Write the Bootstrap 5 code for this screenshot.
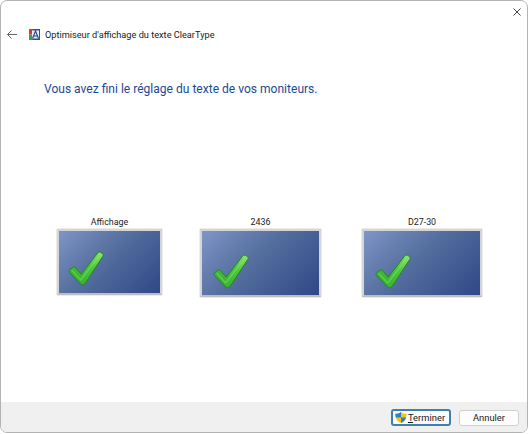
<!DOCTYPE html>
<html lang="fr">
<head>
    <meta charset="UTF-8">
    <title>Optimiseur d'affichage du texte ClearType</title>
    <link rel="stylesheet" href="https://cdn.jsdelivr.net/npm/bootstrap@5.3.0/dist/css/bootstrap.min.css">
    <style>
        html, body {
            height: 100%;
            background: #fff;
        }

        body {
            font-family: Roboto, "Open Sans", sans-serif;
            color: #1a1a1a;
            overflow: hidden;
        }

        .app-window {
            width: 528px;
            height: 433px;
            background: #fff;
            border: 1px solid #b4b4b4;
            border-radius: 7px;
            overflow: hidden;
        }

        .close-row {
            height: 20px;
            padding-right: 6px;
            padding-top: 7px;
        }

        .title-row {
            height: 27px;
            padding-left: 6px;
            font-size: 9.2px;
            color: #222;
        }

        .title-row svg { flex: none; }

        .cleartype-icon { margin-left: 12px; }

        .title-text { margin-left: 5px; }

        .main-heading {
            margin: 31px 0 0 43px;
            font-size: 12.05px;
            font-weight: 400;
            line-height: 20px;
            color: #1c4a96;
        }

        .screens {
            margin-top: 116px;
            padding-left: 56px;
        }

        .screen-item {
            font-size: 8.9px;
            line-height: 14px;
            text-align: center;
        }

        .screen-a { width: 105px; margin-right: 38px; }
        .screen-b { width: 121px; margin-right: 41px; }
        .screen-c { width: 120px; }

        .screen-box {
            position: relative;
            height: 68px;
            border: 2px solid #d3d5d9;
            border-bottom-color: #bcbec2;
            background: linear-gradient(135deg, #7f95c7 0%, #56709f 42%, #2f4888 100%);
            box-shadow: 0 0 1px #8d8d8d;
        }

        .screen-a .screen-box { height: 66px; }

        .screen-box svg {
            position: absolute;
            left: 9px;
            bottom: 7px;
        }

        .screen-b .screen-box svg,
        .screen-c .screen-box svg {
            left: 11px;
            bottom: 6px;
        }

        .bottom-bar {
            height: 30px;
            background: #f0f0f0;
            padding-right: 8px;
            padding-top: 1px;
            gap: 8px;
        }

        .bottom-btn {
            height: 16px;
            font-size: 9.4px;
            line-height: 14px;
            padding: 0;
            color: #1a1a1a;
            background: #fdfdfd;
            border: 1px solid #d0d0d0;
            border-radius: 3px;
        }

        .btn-finish {
            width: 60px;
            height: 17px;
            border: 2px solid #3d7fb5;
            background: #fafafa;
        }

        .btn-finish svg { margin-left: -3px; }

        .btn-cancel { width: 60px; }

        .btn-finish u { text-underline-offset: 1px; }
    </style>
</head>
<body>
    <div class="app-window d-flex flex-column">
        <div class="close-row d-flex justify-content-end">
            <svg width="8" height="8" viewBox="0 0 8 8"><path d="M.5.5l7 7M7.500.5l-7 7" stroke="#444" stroke-width="1" fill="none"/></svg>
        </div>

        <div class="title-row d-flex align-items-center">
            <svg width="10" height="9" viewBox="0 0 10 9"><path d="M.5 4.500h9.500M.5 4.500l4-4M.5 4.500l4 4" stroke="#666" stroke-width="1" fill="none"/></svg>
            <svg class="cleartype-icon" width="11" height="11" viewBox="0 0 11 11">
                <rect width="4" height="5.500" fill="#d23a34"/>
                <rect y="5.500" width="4" height="5.500" fill="#3f9a55"/>
                <rect x="4" width="7" height="11" fill="#2b50a8"/>
                <rect x="3" y="1.500" width="7" height="8" fill="#e9ecf5"/>
                <path d="M3.500 9.500L6.500 2 9.500 9.500M4.500 7h4" fill="none" stroke="#27408f" stroke-width="1.100"/>
            </svg>
            <span class="title-text">Optimiseur d'affichage du texte ClearType</span>
        </div>

        <h1 class="main-heading">Vous avez fini le réglage du texte de vos moniteurs.</h1>

        <div class="screens d-flex">
            <div class="screen-item screen-a">
                <div>Affichage</div>
                <div class="screen-box">
                    <svg width="36" height="35" viewBox="0 0 36 35"><use href="#check"/></svg>
                </div>
            </div>
            <div class="screen-item screen-b">
                <div>2436</div>
                <div class="screen-box">
                    <svg width="36" height="35" viewBox="0 0 36 35"><use href="#check"/></svg>
                </div>
            </div>
            <div class="screen-item screen-c">
                <div>D27-30</div>
                <div class="screen-box">
                    <svg width="36" height="35" viewBox="0 0 36 35"><use href="#check"/></svg>
                </div>
            </div>
        </div>

        <div class="bottom-bar mt-auto d-flex justify-content-end align-items-center">
            <button class="btn bottom-btn btn-finish d-flex align-items-center justify-content-center" type="button">
                <svg width="14" height="13" viewBox="0 0 15 14">
                    <path d="M7.500 1C5.500 2.500 3.500 3 1.500 3c0 4.500 1 8 6 10 5-2 6-5.500 6-10-2 0-4-.5-6-2z" fill="#f5c518"/>
                    <path d="M7.500 1C5.500 2.500 3.500 3 1.500 3c0 1.500.1 2.800.4 4h5.600zM7.500 7v6c3-1.200 4.700-3.200 5.400-6z" fill="#2f7fd0"/>
                </svg>
                <span><u>T</u>erminer</span>
            </button>
            <button class="btn bottom-btn btn-cancel" type="button">Annuler</button>
        </div>
    </div>

    <svg width="0" height="0" class="d-block">
        <defs>
            <linearGradient id="checkFill" x1="0" y1="1" x2="1" y2="0">
                <stop offset="0" stop-color="#2ea82c"/>
                <stop offset=".6" stop-color="#4cc63c"/>
                <stop offset="1" stop-color="#98e572"/>
            </linearGradient>
            <g id="check">
                <path d="M1.500 21.500c-.8-1-.6-2 .4-2.900l2.700-2.100c1.100-.8 2.100-.7 3 .3l5.600 6.400L29.500 2.200c.9-1.200 2-1.500 3.200-.8l1.500 1c1.100.7 1.300 1.700.6 2.900L17.200 32.300c-1.300 1.900-3.600 2-5 .3z" fill="url(#checkFill)" stroke="#1f8a25" stroke-width="1"/>
                <path d="M4 19.500l8.700 9.500L32 4" fill="none" stroke="#8ae86a" stroke-opacity=".45" stroke-width="1.500" stroke-linecap="round" stroke-linejoin="round"/>
            </g>
        </defs>
    </svg>
</body>
</html>
